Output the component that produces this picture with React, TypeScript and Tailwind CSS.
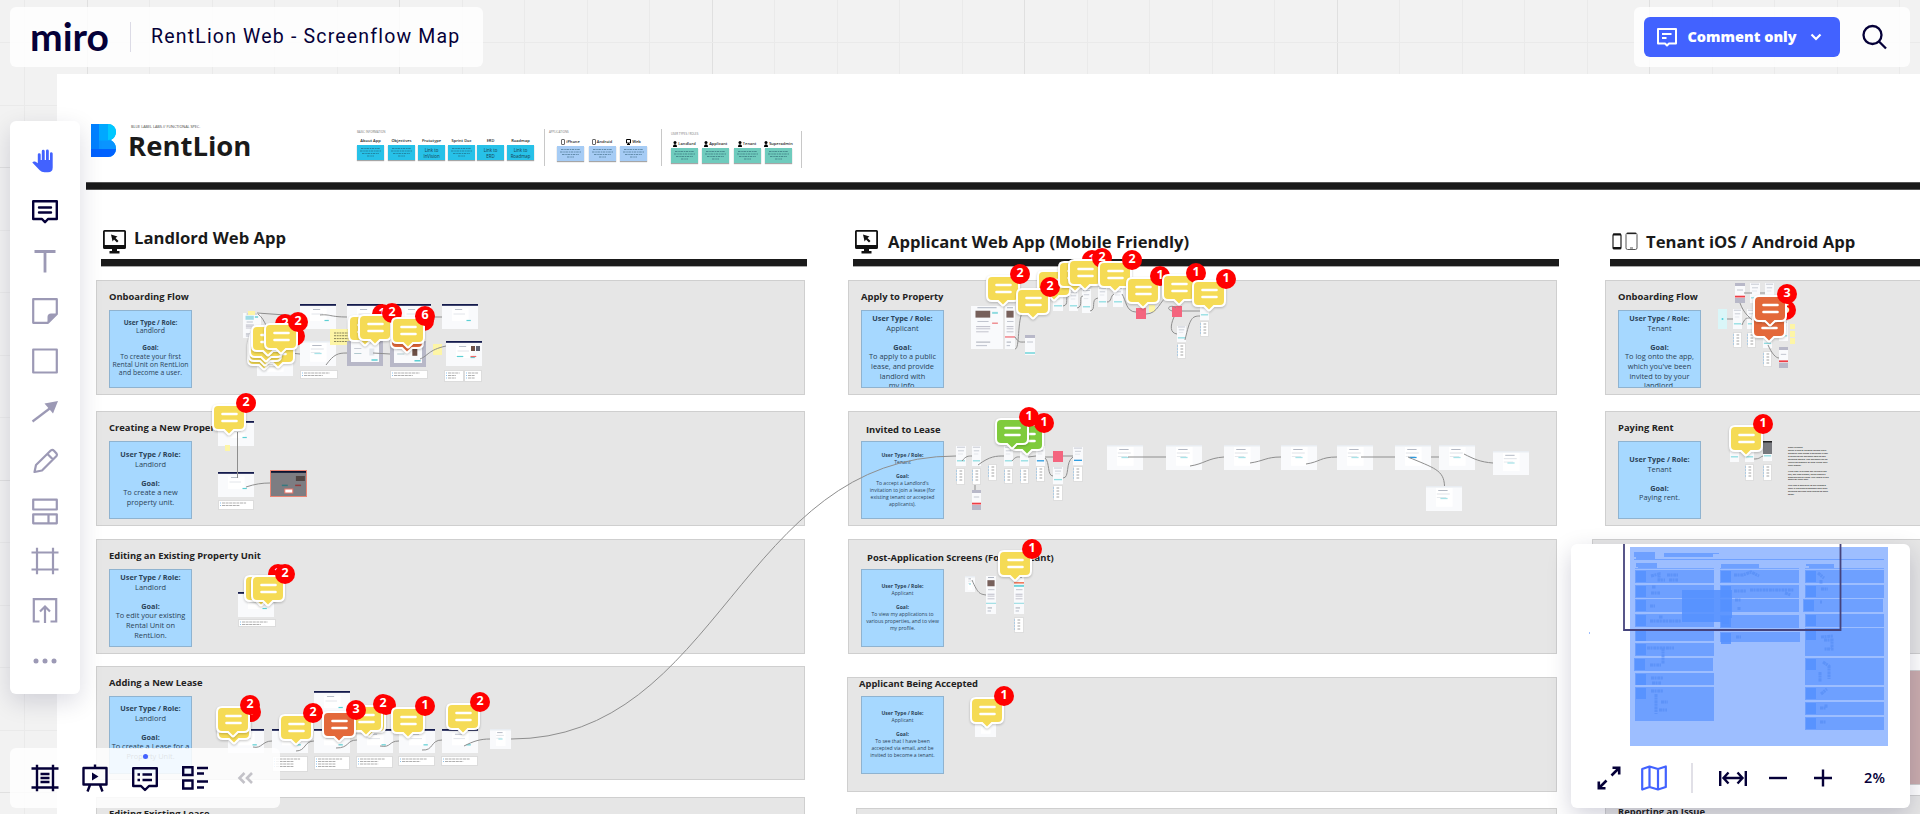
import React from "react";

const NAVY = "#050038";
const MUTED = "#9c99b5";

type Pin = { x: number; y: number; n?: string; c?: string; b?: [number, number] };

const YELLOW = "#f5db55";
const ORANGE = "#e3683a";
const GREEN = "#7fcb3c";

const pins: Pin[] = [
  { x: 249, y: 341, c: YELLOW },
  { x: 263, y: 339, n: "1" },
  { x: 250, y: 337 },
  { x: 251, y: 333 },
  { x: 253, y: 327, n: "2" },
  { x: 266, y: 325, n: "2" },
  { x: 350, y: 317, n: "1" },
  { x: 392, y: 324, c: ORANGE, n: "1" },
  { x: 360, y: 316, n: "2" },
  { x: 393, y: 319, n: "6" },
  { x: 214, y: 406, n: "2" },
  { x: 246, y: 577, n: "2" },
  { x: 253, y: 577, n: "2" },
  { x: 219, y: 715, n: "1" },
  { x: 218, y: 708, n: "2" },
  { x: 281, y: 716, n: "2" },
  { x: 354, y: 708, n: "2" },
  { x: 351, y: 707, n: "2" },
  { x: 324, y: 713, c: ORANGE, n: "3" },
  { x: 393, y: 709, n: "1" },
  { x: 448, y: 705, n: "2" },
  { x: 988, y: 277, n: "2" },
  { x: 1039, y: 272 },
  { x: 1018, y: 290, n: "2" },
  { x: 1060, y: 263, n: "1" },
  { x: 1070, y: 261, n: "2" },
  { x: 1100, y: 263, n: "2" },
  { x: 1128, y: 279, n: "1" },
  { x: 1164, y: 276, n: "1" },
  { x: 1194, y: 282, n: "1" },
  { x: 1012, y: 426, c: GREEN, n: "1" },
  { x: 997, y: 420, c: GREEN, n: "1" },
  { x: 1000, y: 552, n: "1" },
  { x: 972, y: 699, n: "1" },
  { x: 1754, y: 313, c: ORANGE, n: "5" },
  { x: 1755, y: 297, c: ORANGE, n: "3" },
  { x: 1731, y: 427, n: "1" },
];

function CommentPin({ x, y, n, c = YELLOW }: Pin) {
  return (
    <div className="absolute" style={{ left: x - 3, top: y - 3 }}>
      <svg width="38" height="36" viewBox="-3 -3 38 36" className="overflow-visible drop-shadow-[0_1px_1px_rgba(0,0,0,0.22)]">
        <path
          d="M4 0H26Q30 0 30 4V19Q30 23 26 23H19.5L15 27.5L10.500 23H4Q0 23 0 19V4Q0 0 4 0Z"
          fill={c}
          stroke="#fff"
          strokeWidth="4"
          strokeLinejoin="round"
          paintOrder="stroke"
        />
        <path d="M8.500 8H22.500M8.500 15H22.500" stroke="#fff" strokeWidth="2.600" strokeLinecap="round" />
      </svg>
      {n && (
        <span className="absolute left-[25px] top-[-10px] flex h-5 w-5 items-center justify-center rounded-full bg-[#ff0000] pb-px text-[12.500px] leading-none font-bold text-white">
          {n}
        </span>
      )}
    </div>
  );
}

type Kind = "nav" | "web" | "modal" | "dark" | "phone" | "list" | "rows" | "note" | "pink" | "page" | "mobile2" | "cyan";
type Shot = [Kind, number, number, number, number];

const shots: Shot[] = [
  ["page", 243, 313, 18, 25],
  ["note", 248, 311, 7, 4],
  ["nav", 300, 304, 36, 25],
  ["nav", 347, 304, 36, 25],
  ["nav", 395, 304, 36, 25],
  ["nav", 442, 304, 36, 25],
  ["web", 257, 351, 36, 25],
  ["web", 300, 341, 36, 25],
  ["note", 330, 329, 28, 16],
  ["modal", 347, 341, 36, 25],
  ["modal", 390, 341, 36, 26],
  ["note", 433, 344, 9, 11],
  ["nav", 446, 341, 36, 25],
  ["rows", 300, 370, 38, 9],
  ["rows", 390, 370, 38, 9],
  ["rows", 444, 370, 20, 12],
  ["rows", 464, 370, 18, 12],
  ["nav", 218, 421, 36, 25],
  ["note", 225, 445, 5, 6],
  ["nav", 218, 472, 36, 25],
  ["rows", 218, 500, 36, 10],
  ["dark", 270, 470, 37, 27],
  ["nav", 238, 592, 36, 25],
  ["rows", 238, 619, 38, 8],
  ["nav", 228, 729, 36, 24],
  ["nav", 272, 729, 36, 24],
  ["nav", 314, 691, 36, 25],
  ["nav", 314, 729, 36, 24],
  ["nav", 357, 729, 36, 24],
  ["nav", 399, 729, 36, 24],
  ["nav", 442, 729, 36, 24],
  ["web", 490, 729, 21, 20],
  ["rows", 272, 756, 36, 16],
  ["rows", 314, 756, 36, 14],
  ["rows", 356, 756, 37, 12],
  ["rows", 398, 756, 37, 10],
  ["rows", 441, 756, 37, 10],
  ["page", 971, 306, 32, 43],
  ["page", 1005, 306, 10, 43],
  ["mobile2", 1025, 335, 10, 20],
  ["phone", 1053, 291, 10, 20],
  ["phone", 1069, 291, 9, 20],
  ["phone", 1082, 289, 9, 24],
  ["phone", 1098, 287, 9, 20],
  ["phone", 1113, 287, 10, 20],
  ["pink", 1136, 308, 10, 11],
  ["note", 1149, 305, 6, 7],
  ["pink", 1172, 306, 10, 11],
  ["phone", 1200, 300, 9, 20],
  ["list", 1200, 321, 9, 16],
  ["phone", 1177, 326, 9, 16],
  ["list", 1177, 343, 9, 16],
  ["phone", 956, 446, 10, 20],
  ["phone", 972, 446, 9, 20],
  ["phone", 1004, 446, 9, 20],
  ["phone", 1020, 446, 9, 20],
  ["phone", 1036, 446, 9, 20],
  ["pink", 1053, 451, 10, 11],
  ["phone", 1073, 447, 10, 18],
  ["list", 956, 468, 9, 17],
  ["list", 972, 468, 9, 17],
  ["list", 988, 464, 9, 17],
  ["list", 1004, 468, 9, 16],
  ["list", 1020, 468, 9, 16],
  ["list", 1036, 466, 9, 16],
  ["phone", 1053, 467, 10, 17],
  ["list", 1053, 485, 10, 16],
  ["list", 1073, 466, 10, 16],
  ["mobile2", 972, 490, 9, 20],
  ["web", 1107, 445, 36, 25],
  ["web", 1166, 445, 36, 25],
  ["web", 1224, 445, 36, 25],
  ["web", 1281, 445, 36, 25],
  ["web", 1337, 445, 36, 25],
  ["web", 1395, 445, 36, 25],
  ["web", 1439, 445, 36, 25],
  ["web", 1493, 451, 36, 24],
  ["web", 1426, 486, 36, 25],
  ["web", 965, 576, 10, 16],
  ["page", 986, 576, 10, 38],
  ["page", 1014, 576, 10, 38],
  ["list", 1014, 617, 10, 16],
  ["web", 975, 716, 21, 21],
  ["mobile2", 1735, 283, 10, 20],
  ["phone", 1750, 283, 10, 20],
  ["phone", 1765, 283, 9, 20],
  ["cyan", 1718, 309, 9, 20],
  ["phone", 1733, 309, 9, 20],
  ["phone", 1747, 309, 9, 20],
  ["phone", 1763, 330, 9, 18],
  ["phone", 1779, 321, 9, 20],
  ["note", 1790, 324, 5, 5],
  ["note", 1790, 331, 5, 6],
  ["note", 1790, 338, 5, 6],
  ["list", 1733, 332, 9, 16],
  ["list", 1747, 332, 9, 16],
  ["list", 1763, 351, 9, 16],
  ["mobile2", 1779, 347, 9, 21],
  ["phone", 1730, 442, 9, 20],
  ["phone", 1745, 442, 9, 20],
  ["phone", 1763, 441, 9, 20],
  ["list", 1745, 464, 9, 17],
  ["list", 1763, 464, 9, 17],
];

function ScreenShot({ s: [kind, x, y, w, h] }: { s: Shot }) {
  const L = (x1: number, y1: number, x2: number, c: string, sw = 1) => (
    <line key={`${x1}-${y1}-${c}`} x1={x1 * w} x2={x2 * w} y1={y1 * h} y2={y1 * h} stroke={c} strokeWidth={sw} />
  );
  let bg = "#f9fafc";
  let inner: React.ReactNode = null;
  if (kind === "note") {
    bg = "#fdf5a6";
    inner = w > 20 ? [0.25, 0.42, 0.6, 0.78].map((t) => (
      <line key={t} x1="4" x2={w - 5} y1={t * h} y2={t * h} stroke="#6b6848" strokeWidth=".8" strokeDasharray="2 .7" />
    )) : null;
  } else if (kind === "pink") bg = "#f4657e";
  else if (kind === "cyan") {
    bg = "#daf6f8";
    inner = <circle cx={w / 2} cy={h / 2} r="1" fill="#4fd0db" />;
  } else if (kind === "nav") {
    inner = (
      <>
        <rect width={w} height="1.800" fill="#141b4d" />
        <rect x={w * 0.28} y={h * 0.18} width={w * 0.46} height={h * 0.5} fill="#fff" />
        {L(0.36, 0.22, 0.56, "#b9bfca")}
        {L(0.32, 0.4, 0.64, "#e2e5ea")}
        {L(0.68, 0.66, 0.8, "#5ccfd4", 1.2)}
        {x === 446 && (
          <>
            <rect x="25" y="5" width="4" height="5" fill="#6d4f45" />
            <rect x="30" y="5" width="4" height="5" fill="#5d6070" />
            {L(0.3, 0.62, 0.48, "#5ccfd4", 1.2)}
            {L(0.68, 0.62, 0.84, "#ee6a6a", 1.2)}
          </>
        )}
      </>
    );
  } else if (kind === "web") {
    inner = (
      <>
        <rect width={w} height="1.500" fill="#e9edf2" />
        <rect x={w * 0.28} y="2" width={w * 0.46} height={h * 0.75} fill="#fff" />
        {L(0.34, 0.18, 0.6, "#b4b9c4")}
        {L(0.3, 0.32, 0.66, "#dfe2e7")}
        {L(0.3, 0.46, 0.56, "#e6e9ed")}
        {L(0.4, 0.5, 0.6, x === 1395 ? "#2a9be0" : "#a9e3e8", 1.3)}
      </>
    );
  } else if (kind === "modal") {
    bg = "#b8b8c8";
    inner = (
      <>
        <rect x="4" y="0" width={w - 8} height={h - 4} fill="#f9fafc" />
        {L(0.2, 0.3, 0.4, "#c8ccd4")}
        {L(0.2, 0.5, 0.4, "#b0c8ce")}
        <rect x={w * 0.62} y={h * 0.3} width="5" height="7" fill={x > 385 ? "#6d4f45" : "#e2e6ec"} />
        {L(0.68, 0.76, 0.85, "#5ccfd4", 1.5)}
      </>
    );
  } else if (kind === "dark") {
    bg = "#7d7d82";
    inner = (
      <>
        <rect x=".5" y=".5" width={w - 1} height={h - 1} fill="none" stroke="#e98574" />
        <rect x="1" y="1" width={w - 2} height="1.800" fill="#0a1230" />
        <rect x={w * 0.7} y="6" width="9" height="5" fill="#504543" />
        {L(0.32, 0.57, 0.48, "#35797f", 1.5)}
        {L(0.68, 0.57, 0.84, "#963b3b", 1.5)}
        <rect x={w * 0.4} y="19" width="8" height="4" fill="#fff" stroke="#ec7467" />
      </>
    );
  } else if (kind === "rows") {
    bg = "#fff";
    inner = (
      <>
        <rect x=".5" y=".5" width={w - 1} height={h - 1} fill="none" stroke="#dcdcdc" />
        {[3, 5.5, 8, 10.5].filter((t) => t < h - 2).map((t) => (
          <g key={t}>
            <rect x="2" y={t - 0.5} width="1" height="1" fill="#8cc2ee" />
            <line x1="4" x2={w * (t % 3 ? 0.6 : 0.78)} y1={t} y2={t} stroke="#9a9a9a" strokeWidth=".8" strokeDasharray="3 .6" />
          </g>
        ))}
      </>
    );
  } else if (kind === "list") {
    bg = "#fff";
    inner = (
      <>
        <rect x=".5" y=".5" width={w - 1} height={h - 1} fill="none" stroke="#dedede" />
        {[3, 6, 9, 12].filter((t) => t < h - 1).map((t) => (
          <g key={t}>
            <rect x="0" y={t - 0.5} width="1" height="1" fill="#7fb9ea" />
            <line x1="3.500" x2="6.200" y1={t} y2={t} stroke="#999" strokeWidth=".9" />
          </g>
        ))}
      </>
    );
  } else if (kind === "phone") {
    inner = (
      <>
        {L(0.1, 0.06, 0.9, "#c5c9d2")}
        {L(0.2, 0.24, 0.8, "#c9cdd6")}
        {L(0.2, 0.4, 0.7, "#e3e6eb")}
        {L(0.1, 0.74, 0.9, x === 1036 || x === 1073 ? "#2a9be0" : "#8fdde2", 1.3)}
        {x === 1763 && y === 441 && (
          <>
            <rect width={w} height="13" fill="#77797e" />
            <rect width={w} height="1.500" fill="#222" />
          </>
        )}
      </>
    );
  } else if (kind === "mobile2") {
    inner = (
      <>
        <rect width={w} height="3" fill="#b8b8c8" />
        {L(0.2, 0.35, 0.8, "#c2c6cf")}
        {x === 1025 ? L(0, 0.9, 1, "#5ccfd4", 1.3) : L(0, 0.68, 1, "#ee3d45", 1.8)}
        {x !== 1025 && <rect y={h * 0.75} width={w} height={h * 0.25} fill="#b8b8c8" />}
      </>
    );
  } else if (kind === "page") {
    const web = w > 15;
    inner = (
      <>
        {L(0.2, 0.04, 0.8, "#aeb4c0")}
        {x === 1014 ? (
          <>
            {L(0, 0.18, 1, "#f07050", 1.5)}
            {L(0, 0.26, 1, "#6fd3da", 2)}
          </>
        ) : (
          <rect x={w * 0.14} y={h * 0.11} width={w * (web ? 0.46 : 0.72)} height={h * 0.16} fill={w === 18 ? "#9fdce6" : "#77605b"} />
        )}
        {web && L(0.66, 0.16, 0.84, "#8fdbe0", 2)}
        {L(0.2, 0.36, web ? 0.55 : 0.85, "#c0c4ce")}
        {L(0.16, 0.48, web ? 0.6 : 0.85, "#bcbcc8")}
        {L(0.16, 0.53, web ? 0.6 : 0.85, "#c4c4ce")}
        {L(0.16, 0.6, web ? 0.55 : 0.85, "#c4c4ce")}
        {!web && L(0, 0.72, 1, y > 500 ? "#a5e0e5" : "#f07078", 1.3)}
        {web && w > 20 && L(0.66, 0.4, 0.84, "#ee7f83", 1.3)}
        {L(0.16, 0.84, 0.6, "#b4b8c2", 1.2)}
        {L(0.16, 0.92, 0.5, "#c4c8d2", 1.2)}
      </>
    );
  }
  return (
    <svg className="absolute" style={{ left: x, top: y, width: w, height: h }} viewBox={`0 0 ${w} ${h}`}>
      <rect width={w} height={h} fill={bg} />
      {inner}
    </svg>
  );
}

const connectors = [
  "M257 313L300 316",
  "M258 314C266 320 266 330 275 340",
  "M320 315C330 314 330 317 347 317H347",
  "M383 317H395M431 317H442",
  "M290 353L300 354M326 365C334 354 338 353 347 353",
  "M373 353L390 354M420 359C428 356 428 350 446 346",
  "M237.500 432V478",
  "M246 487C255 484 262 483 270 483",
  "M253 747C262 749 262 741 272 741M296 751C306 751 304 741 314 741M336 748C350 748 346 740 357 740M380 746C392 748 388 741 399 741M422 750C434 751 430 740 442 740M464 746C474 741 480 739 490 739",
  "M511 739C720 739 740 456 956 456",
  "M1015 349C1020 349 1017 320 1023 311M1015 337C1019 343 1020 342 1025 342",
  "M1063 306C1070 305 1064 296 1069 296M1077 308C1084 307 1078 296 1083 296M1090 311C1097 310 1090 299 1098 298M1107 302C1112 302 1110 296 1114 294M1122 294C1126 300 1126 312 1136 312M1146 314C1158 314 1160 300 1168 296",
  "M1172 311C1164 308 1172 304 1176 308M1182 311H1200M1174 317C1170 326 1170 333 1177 334M1185 340C1190 318 1192 316 1200 316",
  "M962 461C966 456 968 456 972 456M978 465C990 456 996 456 1004 456M1012 461C1016 456 1018 457 1020 457M1028 457L1036 456M1045 457H1053M1063 456H1073M1045 458C1050 462 1047 476 1053 476M1063 478C1070 478 1065 462 1073 457",
  "M975 485V490",
  "M1128 457H1166M1190 466C1204 464 1208 458 1224 457M1250 463C1264 461 1266 457 1281 457M1306 464C1320 462 1320 457 1337 457M1361 457H1395M1431 457H1439M1408 457C1434 468 1444 470 1444.500 486M1464 454C1474 459 1480 462 1493 463",
  "M972 580C978 594 980 594 986 595",
  "M1744 293H1752M1760 293H1765M1740 303C1744 314 1750 318 1755 322M1727 319H1733M1742 325C1745 318 1746 318 1750 318M1768 345C1772 354 1776 358 1779 358",
  "M1754 459C1760 459 1760 457 1763 456",
];

const ROLE = "User Type / Role:";

type CardData = {
  box: string;
  title: string;
  titleCls: string;
  note?: { role: string; goal: string[]; cls: string };
};

const SMALL = "text-[6.900px] leading-[8.400px] [&>p.font-bold]:text-[6.450px]";
const MID = "text-[7.400px] leading-[9.600px] [&>p.font-bold]:text-[7.250px]";
const TINY = "text-[5.050px] leading-[6.950px]";

function Card({ box, title, titleCls, note }: CardData) {
  return (
    <div className={`shrink-0 border border-[#cfcfcf] bg-[#e6e6e6] px-3 ${box}`}>
      <h3 className={`whitespace-nowrap text-[9.400px] leading-[14px] font-bold text-[#222] ${titleCls}`}>{title}</h3>
      {note && (
        <div className={`h-[78px] w-[83px] overflow-hidden border border-[#8fb3d0] bg-[#a6d8ff] text-center whitespace-nowrap text-[#2b4358] [&>p]:-mx-1 ${note.cls}`}>
          <p className="font-bold">{ROLE}</p>
          <p>{note.role}</p>
          <p className="font-bold">&nbsp;</p>
          <p className="font-bold">Goal:</p>
          {note.goal.map((g) => (
            <p key={g}>{g}</p>
          ))}
        </div>
      )}
    </div>
  );
}

const T = "pt-[9px] h-[29px]";

const landlord: CardData[] = [
  { box: "h-[115px]", title: "Onboarding Flow", titleCls: T, note: { role: "Landlord", goal: ["To create your first", "Rental Unit on RentLion", "and become a user."], cls: `${SMALL} pt-[8px]` } },
  { box: "mt-4 h-[115px]", title: "Creating a New Property", titleCls: T, note: { role: "Landlord", goal: ["To create a new", "property unit."], cls: `${MID} pt-[8px]` } },
  { box: "mt-[13px] h-[115px]", title: "Editing an Existing Property Unit", titleCls: T, note: { role: "Landlord", goal: ["To edit your existing", "Rental Unit on", "RentLion."], cls: `${MID} pt-[3px]` } },
  { box: "mt-3 h-[114px]", title: "Adding a New Lease", titleCls: T, note: { role: "Landlord", goal: ["To create a Lease for a", "Property Unit."], cls: `${MID} pt-[7px]` } },
  { box: "mt-[17px] h-[115px]", title: "Editing Existing Lease", titleCls: T },
];

const applicant: CardData[] = [
  { box: "h-[115px]", title: "Apply to Property", titleCls: T, note: { role: "Applicant", goal: ["To apply to a public", "lease, and provide", "landlord with", "my info."], cls: `${MID} pt-[3px]` } },
  { box: "mt-4 h-[115px]", title: "Invited to Lease", titleCls: "pl-[5px] pt-[11px] h-[29px]", note: { role: "Tenant", goal: ["To accept a Landlord's", "invitation to join a lease (for", "existing tenant or accepted", "applicants)."], cls: `${TINY} pt-[10px]` } },
  { box: "mt-[13px] h-[115px]", title: "Post-Application Screens (For Applicant)", titleCls: "pl-[6px] pt-[11px] h-[29px]", note: { role: "Applicant", goal: ["To view my applications to", "various properties, and to view", "my profile."], cls: `${TINY} pt-[13px]` } },
  { box: "-ml-px mt-[23px] h-[115px]", title: "Applicant Being Accepted", titleCls: "-ml-px pt-0 -translate-y-px h-[18px]", note: { role: "Applicant", goal: ["To see that I have been", "accepted via email, and be", "invited to become a tenant."], cls: `${TINY} pt-[13px] ml-px` } },
  { box: "ml-2 mt-4 h-[115px]", title: "", titleCls: T },
];

const tenant: CardData[] = [
  { box: "h-[115px]", title: "Onboarding Flow", titleCls: T, note: { role: "Tenant", goal: ["To log onto the app,", "which you've been", "invited to by your", "landlord."], cls: `${MID} pt-[3px]` } },
  { box: "mt-4 h-[115px]", title: "Paying Rent", titleCls: T, note: { role: "Tenant", goal: ["Paying rent."], cls: `${MID} pt-[13px]` } },
  { box: "-ml-[13px] mt-[13px] h-[115px]", title: "", titleCls: T },
  { box: "mt-4 h-[115px] bg-[#cbadae]!", title: "", titleCls: T },
  { box: "mt-[10px] h-[115px]", title: "Reporting an Issue", titleCls: T },
];

function Column({ icon, title, titleCls, cards, cls }: { icon: React.ReactNode; title: string; titleCls: string; cards: CardData[]; cls: string }) {
  return (
    <section className={`w-[709px] shrink-0 ${cls}`}>
      <header className="ml-[6px] h-[69px]">
        <div className={`flex gap-2 ${titleCls}`}>
          {icon}
          <h2 className="whitespace-nowrap text-[16.650px] leading-6 font-bold text-[#1a1a1a]">{title}</h2>
        </div>
      </header>
      <div className="mb-[14px] ml-[5px] h-[7px] w-[706px] bg-[#1a1a1a] shadow-[0_1px_0_#a8a8a8]" />
      {cards.map((c, i) => (
        <Card key={i} {...c} />
      ))}
    </section>
  );
}

const Monitor = () => (
  <svg width="23" height="24" viewBox="0 0 23 24" className="shrink-0">
    <path d="M0 1.500Q0 0 1.500 0H21.500Q23 0 23 1.500V17.500Q23 19 21.500 19H14V21H16.500V23.500H6.500V21H9V19H1.500Q0 19 0 17.500ZM1.800 1.800V15H21.200V1.800Z" fill="#111" fillRule="evenodd" />
    <path d="M8 4.500L14.500 6.500L12.500 8L15.500 11L14 12.500L11 9.500L9.600 11.500Z" fill="#111" />
  </svg>
);

const Phones = () => (
  <svg width="26" height="19" viewBox="0 0 26 19" className="shrink-0" fill="none">
    <rect x="1" y="2" width="8" height="15" rx="1.300" stroke="#222" strokeWidth="1.200" />
    <path d="M1 2.500H9M1 16H9" stroke="#111" strokeWidth="2.200" />
    <rect x="14" y="1" width="11" height="16.500" rx="1.600" stroke="#555" />
    <path d="M15 1.500H24" stroke="#222" strokeWidth="1.300" />
    <path d="M18 16H21" stroke="#555" />
  </svg>
);

const Person = () => (
  <svg width="4" height="6" viewBox="0 0 4 6" className="shrink-0">
    <circle cx="2" cy="1.500" r="1.500" fill="#000" />
    <path d="M0 6Q0 3.200 2 3.200T4 6Z" fill="#000" />
  </svg>
);
const Device = ({ web = false }: { web?: boolean }) =>
  web ? (
    <svg width="5" height="6" viewBox="0 0 5 6" className="shrink-0"><path d="M.5.500H4.500V4H.5ZM2.500 4V5.500M1 5.500H4" stroke="#000" fill="none" /></svg>
  ) : (
    <svg width="4" height="6" viewBox="0 0 4 6" className="shrink-0"><rect x=".5" y=".5" width="3" height="5" rx=".5" stroke="#444" fill="none" strokeWidth=".8" /></svg>
  );

function Mini({ label, icon, tone, body, cls = "" }: { label: string; icon?: React.ReactNode; tone: string; body?: string[]; cls?: string }) {
  return (
    <div className={`w-[27px] shrink-0 ${cls}`}>
      <div className="flex h-[9px] items-center justify-center gap-px whitespace-nowrap text-[4px] leading-none font-semibold text-[#222]">
        {icon}
        {label}
      </div>
      <div className={`flex h-[15px] flex-col items-center justify-center overflow-hidden shadow-[0_1px_1px_rgba(0,0,0,0.35)] ${tone}`}>
        {body ? (
          body.map((b) => <span key={b} className="text-[4.400px] leading-[6px] text-[#174050]">{b}</span>)
        ) : (
          <svg width="23" height="11" viewBox="0 0 23 11">
            <path d="M2 1.500H21M1 4H22M3 6.500H20M8 9H15" stroke="#1d4c60" strokeWidth=".9" strokeOpacity=".55" strokeDasharray="2.500 .8 1.500 .6" />
          </svg>
        )}
      </div>
    </div>
  );
}

function Group({ title, cls, row, children }: { title: string; cls: string; row: string; children: React.ReactNode }) {
  return (
    <div className={`h-[37px] shrink-0 ${cls}`}>
      <p className="h-[7px] whitespace-nowrap text-[2.900px] leading-[7px] text-[#777]">{title}</p>
      <div className={`flex ${row}`}>{children}</div>
    </div>
  );
}

function Board() {
  return (
    <div className="ml-[57px] mt-[74px] h-[740px] bg-white">
      <div className="flex h-[108px] items-start">
        <svg width="25" height="33" viewBox="0 0 25 33" className="ml-[34px] mt-[50px] shrink-0">
          <path d="M0 0H17A8 8 0 0 1 25 8Q25 13 20 16Q25 19 25 25A8 8 0 0 1 17 33H0Z" fill="#00a8ff" />
          <path d="M17 0A8 8 0 0 1 17 16Z" fill="#00c8ff" />
          <path d="M0 16.500H20Q25 19 25 25H0Z" fill="#0a94ff" />
          <path d="M0 0H8V33H0Z" fill="#0080ff" />
          <path d="M0 25H25A8 8 0 0 1 17 33H0Z" fill="#0062ff" />
        </svg>
        <div className="ml-[12px] mt-[50px] w-[229px] shrink-0">
          <p className="ml-[3px] text-[3.750px] leading-[6px] text-[#444]">BLUE LABEL LABS // FUNCTIONAL SPEC.</p>
          <h1 className="text-[27.500px] leading-[32px] font-bold text-[#1a1a1a]">RentLion</h1>
        </div>
        <Group title="BASIC INFORMATION" cls="mt-[55px] w-[188px] border-r border-[#c8c8c8]" row="gap-[3px]">
          <Mini label="About App" tone="bg-[#27c1e8]" />
          <Mini label="Objectives" tone="bg-[#27c1e8]" cls="ml-px" />
          <Mini label="Prototype" tone="bg-[#27c1e8]" body={["Link to", "InVision"]} />
          <Mini label="Sprint Doc" tone="bg-[#27c1e8]" />
          <Mini label="ERD" tone="bg-[#27c1e8]" body={["Link to", "ERD"]} cls="-ml-px" />
          <Mini label="Roadmap" tone="bg-[#27c1e8]" body={["Link to", "Roadmap"]} />
        </Group>
        <Group title="APPLICATIONS" cls="mt-[55px] w-[117px] border-r border-[#c8c8c8] pl-[4px] [&>div]:pl-[8px]" row="gap-[4.500px] pt-px">
          <Mini label="iPhone" icon={<Device />} tone="bg-[#a6ccf5]" />
          <Mini label="Android" icon={<Device />} tone="bg-[#a6ccf5]" />
          <Mini label="Web" icon={<Device web />} tone="bg-[#a6ccf5]" />
        </Group>
        <Group title="USER TYPES / ROLES" cls="mt-[57px] w-[140px] border-r border-[#c8c8c8] pl-[9px]" row="gap-[4.300px] pt-px">
          <Mini label="Landlord" icon={<Person />} tone="bg-[#6fcbbd]" />
          <Mini label="Applicant" icon={<Person />} tone="bg-[#6fcbbd]" />
          <Mini label="Tenant" icon={<Person />} tone="bg-[#6fcbbd]" />
          <Mini label="Superadmin" icon={<Person />} tone="bg-[#6fcbbd]" />
        </Group>
      </div>
      <div className="ml-[29px] h-2 border-y border-[#555] bg-[#1a1a1a]" />
      <div className="flex h-[624px] overflow-hidden pl-[39px]">
        <Column cls="" icon={<Monitor />} title="Landlord Web App" titleCls="pt-[40px] pl-px [&>h2]:-mt-[4px]" cards={landlord} />
        <Column cls="ml-[43px]" icon={<Monitor />} title="Applicant Web App (Mobile Friendly)" titleCls="pt-[40px] pl-px [&>h2]:ml-[2px]" cards={applicant} />
        <Column cls="ml-[48px]" icon={<Phones />} title="Tenant iOS / Android App" titleCls="pt-[42px] pl-px [&>h2]:-mt-[2px]" cards={tenant} />
      </div>
    </div>
  );
}

function Icon({ children, color = MUTED, size = 28, w = 2.2 }: { children: React.ReactNode; color?: string; size?: number; w?: number }) {
  return (
    <svg width={size} height={size} viewBox="0 0 28 28" fill="none" stroke={color} strokeWidth={w} className="shrink-0">
      {children}
    </svg>
  );
}

const panel = "rounded-md bg-white/85";

function Toolbar() {
  return (
    <nav className="flex h-[573px] w-[70px] flex-col items-center gap-[22px] rounded-md bg-white pt-[26px] shadow-[0_8px_24px_rgba(5,0,56,0.14)]">
      <Icon color="#4262ff">
        <path
          stroke="none"
          fill="#4262ff"
          d="M1.300 15.500C2.500 14 4.500 14.200 6.800 16.300V7.600Q6.800 6.200 8.200 6.200T9.700 7.600V13H10.800V4.200Q10.800 2.800 12.200 2.800T13.700 4.200V13H15V3.800Q15 2.600 16.400 2.600T17.800 4V13H19V6.500Q19 5.200 20.200 5.200T21.700 6.500V20.500Q21.700 25.300 17 25.300H13.500Q10.500 25.300 8.700 23.300Z"
        />
      </Icon>
      <Icon color={NAVY} w={2.4}>
        <path d="M2.200 4.200H25.800V22H17L14 25.200L11 22H2.200Z M8 10.500H20M8 15.500H20" strokeLinejoin="round" strokeLinecap="round" />
      </Icon>
      <Icon w={2.800}>
        <path d="M3.500 4.500H24.500M14 4.500V25.500" />
      </Icon>
      <Icon>
        <path d="M2.200 2.200H25.800V17L17 25.800H2.200Z" strokeLinejoin="round" />
        <path d="M25.500 16.500H20Q16.500 16.500 16.500 20V25.500Z" fill={MUTED} stroke="none" />
      </Icon>
      <Icon>
        <path d="M2.200 2.500H25.800V25.500H2.200Z" strokeLinejoin="round" />
      </Icon>
      <Icon>
        <path d="M1.500 24.500L20 10.500" />
        <path d="M27 4L13.500 6.500L22 16.500Z" fill={MUTED} stroke="none" />
      </Icon>
      <Icon>
        <path d="M3.500 25L5 18L20 3.300Q21.500 2.300 23 3.700L25.500 6.500Q26.500 7.800 25.500 9L11 23.500ZM16.500 7L22 12.500" strokeLinejoin="round" />
      </Icon>
      <Icon>
        <path d="M2.200 2.700H25.800V12.500H2.200ZM2.200 17.300H25.800V26.300H2.200ZM17.500 17.300V26.300" strokeLinejoin="round" />
      </Icon>
      <Icon>
        <path d="M6 .8V27.200M22 .8V27.200M.5 5.500H27.500M.5 22.500H27.500" />
      </Icon>
      <Icon>
        <path d="M8.500 24.500H2.800V2.200H25.200V24.500H19.500M14 26V10M9 14.500L14 9.500L19 14.500" />
      </Icon>
      <Icon>
        <g fill={MUTED} stroke="none">
          <circle cx="5" cy="14" r="2.500" />
          <circle cx="14" cy="14" r="2.500" />
          <circle cx="23" cy="14" r="2.500" />
        </g>
      </Icon>
    </nav>
  );
}

function BottomBar() {
  return (
    <div className={`flex h-[60px] w-[270px] items-center gap-[22px] pl-[21px] ${panel}`}>
      <Icon color={NAVY} w={2.4}>
        <path d="M6 .8V27.200M22 .8V27.200M.5 4.500H27.500M.5 23.500H27.500M9.500 10H18.500M9.500 14H18.500M9.500 18H18.500" />
      </Icon>
      <Icon color={NAVY} w={2.4}>
        <path d="M2.500 4H25.500V20.500H2.500ZM14 4V.5M9 21L6.500 27.500M19 21L21.500 27.500" strokeLinejoin="round" />
        <path d="M11 8.500V16.500L17.500 12.500Z" fill={NAVY} stroke="none" />
      </Icon>
      <div className="relative">
        <Icon color={NAVY} w={2.4}>
          <path d="M2.200 4.200H25.800V22H18L14 26L10 22H2.200Z M11.500 10.500H21M11.500 16H21M6.500 10.500H9M6.500 16H9" strokeLinejoin="round" />
        </Icon>
        <span className="absolute -top-[10px] left-[11.500px] h-[5px] w-[5px] rounded-full bg-[#4262ff]" />
      </div>
      <Icon color={NAVY} w={2.4}>
        <path d="M2.200 3.200H11.500V11H2.200ZM2.200 16.500H11.500V24.500H2.200ZM16 4H27M16 9.500H23M16 17.500H27M16 23.500H23" />
      </Icon>
      <Icon color="#c3c2c8" w={2.6}>
        <path d="M13.500 9L8.500 14L13.500 19M21 9L16 14L21 19" />
      </Icon>
    </div>
  );
}

const miniCols: { x: number; rows: [number, number, number, number][] }[] = [
  { x: 64, rows: [[26, 13, 64, 79], [41, 13, 64, 79], [55, 13, 64, 79], [70, 13, 64, 79], [85, 12, 64, 79], [99, 13, 64, 79], [114, 13, 63, 79], [129, 12, 64, 79], [143, 34, 64, 79]] },
  { x: 149, rows: [[26, 13, 149, 79], [41, 13, 149, 79], [55, 13, 149, 79], [71, 13, 149, 79], [88, 10, 149, 80]] },
  { x: 234, rows: [[26, 13, 234, 79], [41, 13, 234, 79], [55, 13, 232, 80], [70, 13, 234, 79], [84, 28, 234, 79], [114, 27, 234, 79], [143, 13, 234, 79], [158, 13, 234, 79], [173, 13, 234, 79]] },
];

function Minimap() {
  return (
    <svg width="339" height="204" viewBox="0 0 339 204" className="block overflow-hidden rounded-t-md">
      <rect x="59" y="3" width="258" height="199" fill="#9dbeff" />
      <g fill="#6ea0ff">
        {miniCols.map((c) => (
          <g key={c.x}>
            <rect x={c.x} y="24" width="79" height=".8" />
            {c.rows.map(([y, h, x, w]) => (
              <rect key={y} x={x} y={y} width={w} height={h} />
            ))}
          </g>
        ))}
        <rect x="63" y="15" width="250" height="1" />
        <path d="M63 8H84V15H65V13H63ZM93 9H148V10H142V13H93ZM65 19H86V24H67V23H65ZM150 20H188V24H150ZM235 20H263V24H238V22H235Z" />
      </g>
      <g fill="#5590ff" fillOpacity=".85">
        {miniCols.map((c) =>
          c.rows.map(([y, , x]) => <path key={`${x}-${y}`} d={`M${x + 1} ${y + 1}H${x + 11}V${y + 12}H${x + 1}Z`} />)
        )}
        <path d="M111 46H161V74H158V80H151V78H111Z" />
      </g>
      <path
        d="M80 32L88 30V36H94M96 31H107M98 36H107M81 43H85M80 49H89M79 77H110M88 73H92M79 62H84M76 104H103M92 104V120M79 121H90M80 134H92M81 139H90M80 147H92M85 150V170M90 158H97M88 166H96M163 31H172L180 28L188 32M163 47H175M179 46H223M214 49L220 51M164 56H170M168 63V66M247 29L253 34M250 36V40M250 45H257M249 58H251M250 93L262 92M253 96H261V105H253M252 118L258 122V135M249 128V138M250 150L256 145M249 164H255V160M249 178H255M165 93H170"
        stroke="#568df5"
        strokeWidth="3"
        strokeDasharray="3 .5 2 .8"
        strokeOpacity=".7"
        fill="none"
      />
      <path d="M53 -4V86H269.500V-4" fill="none" stroke="#45437c" strokeWidth="1.800" />
      <rect x="18" y="88" width="1" height="2" fill="#9dbeff" />
    </svg>
  );
}

function MapPanel() {
  return (
    <div className="h-[264px] w-[339px] rounded-md bg-white shadow-[0_8px_24px_rgba(5,0,56,0.18)]">
      <Minimap />
      <div className="flex h-[60px] items-center pl-[24px]">
        <Icon color={NAVY} w={2.6}>
          <path d="M16.500 11.500L24 4M17.500 3.800H24.200V10.500M11.500 16.500L4 24M3.800 17.500V24.200H10.500" />
        </Icon>
        <div className="ml-[17px] flex">
          <Icon color="#4262ff" w={2.2}>
            <path d="M2.200 5L9.500 2.500L18 5L25.800 2.500V23L18 25.500L9.500 23L2.200 25.500ZM9.500 2.500V23M18 5V25.500" strokeLinejoin="round" />
          </Icon>
        </div>
        <span className="ml-[23px] mr-[26px] h-[30px] w-[2px] bg-[#e1e0e7]" />
        <Icon color={NAVY} w={2.4}>
          <path d="M1.200 7V22M26.800 7V22M4.500 14H23.500M9.500 8.500L4.500 14L9.500 19.500M18.500 8.500L23.500 14L18.500 19.500" />
        </Icon>
        <div className="ml-[17px] flex gap-[17px]">
          <Icon color={NAVY} w={2.4}><path d="M5 14H23" /></Icon>
          <Icon color={NAVY} w={2.4}><path d="M5 14H23M14 5.500V22.500" /></Icon>
        </div>
        <span className="ml-[27px] text-[14.500px] font-semibold tracking-[0.2px] text-[#050038]">2%</span>
      </div>
    </div>
  );
}

const FINE = [
  "Email Screens",
  "When a new or existing tenant has a",
  "property that needs a payment a user",
  "is taken to the payment flow to add",
  "payment details. The payment can be",
  "recurring monthly or paid in one part",
  "each month.",
  " ",
  "If the user is already set up then just",
  "tap, pay now button, which opens a",
  "different set of views. The layout is the",
  "same for each user.",
  "  ",
  "The rent is sent over to the landlord",
  "after it has been processed with their",
  "payment services and cleared to bank",
  "today.",
];

export default function App() {
  const v = Array.from({ length: 31 }, (_, i) => 24 + i * 62.5);
  const h = Array.from({ length: 13 }, (_, i) => 42 + i * 62.5);
  return (
    <div className="relative h-[814px] w-[1920px] overflow-hidden bg-[#f2f2f2] font-['Open_Sans','Noto_Sans',sans-serif]">
      <svg className="absolute inset-0" width="1920" height="814">
        {v.map((x, i) => (
          <rect key={x} x={Math.round(x)} y="0" width="1" height="814" fill={i % 5 === 1 ? "#e0e0e0" : "#eaeaea"} />
        ))}
        {h.map((y, i) => (
          <rect key={y} x="0" y={Math.round(y)} width="1920" height="1" fill={i % 5 === 2 ? "#e0e0e0" : "#eaeaea"} />
        ))}
      </svg>

      <div className="absolute inset-0">
        <Board />
      </div>

      <div className="absolute inset-0">
        {shots.map((s, i) => (
          <ScreenShot key={i} s={s} />
        ))}
        <div className="absolute left-[1788px] top-[447px] w-[40px] text-[2.200px] leading-[2.950px] font-semibold whitespace-pre text-[#222]">
          {FINE.map((f) => (
            <p key={f}>{f}</p>
          ))}
        </div>
        <svg className="absolute inset-0" width="1920" height="814" fill="none" stroke="#8e8e8e" strokeWidth="1">
          {connectors.map((d) => (
            <path key={d} d={d} />
          ))}
        </svg>
        {pins.map((p, i) => (
          <CommentPin key={i} {...p} />
        ))}
      </div>

      <div className="absolute inset-0 flex justify-between px-[10px] pt-[7px] pb-[6px]">
        <div className="flex flex-col">
          <header className={`flex h-[60px] w-[473px] items-center pl-[20px] ${panel}`}>
            <span className="w-[81px] -translate-y-px font-[Lato] text-[39px] leading-[40px] font-bold text-[#050038]">miro</span>
            <span className="ml-[19px] h-[30px] w-px bg-[#dcdbe6]" />
            <span className="ml-[20px] whitespace-nowrap font-[Roboto] text-[19.500px] tracking-[1.180px] text-[#050038]">RentLion Web - Screenflow Map</span>
          </header>
          <div className="mt-[54px]">
            <Toolbar />
          </div>
          <div className="mt-auto">
            <BottomBar />
          </div>
        </div>
        <div className="flex flex-col items-end justify-between">
          <div className={`flex h-[60px] w-[276px] items-center pl-[10px] ${panel}`}>
            <button className="flex h-10 w-[196px] items-center rounded-md bg-[#4262ff] pl-[12px] text-white">
              <svg width="22" height="20" viewBox="0 0 22 20" fill="none" stroke="#fff" strokeWidth="2">
                <path d="M2 2H20V16.500H13L11 18.500L9 16.500H2ZM6 7H15.500M6 11H10.500" strokeLinejoin="round" />
              </svg>
              <span className="ml-[8px] w-[112px] whitespace-nowrap text-[14.500px] font-extrabold">Comment only</span>
              <svg width="12" height="8" viewBox="0 0 12 8" fill="none" stroke="#fff" strokeWidth="2.200" className="ml-[12px]">
                <path d="M1.500 1.500L6 6L10.500 1.500" />
              </svg>
            </button>
            <svg width="26" height="26" viewBox="0 0 26 26" fill="none" stroke={NAVY} strokeWidth="2.300" className="ml-[21px]">
              <circle cx="11.500" cy="11" r="9" />
              <path d="M18 17.500L25 24.500" />
            </svg>
          </div>
          <MapPanel />
        </div>
      </div>
    </div>
  );
}
